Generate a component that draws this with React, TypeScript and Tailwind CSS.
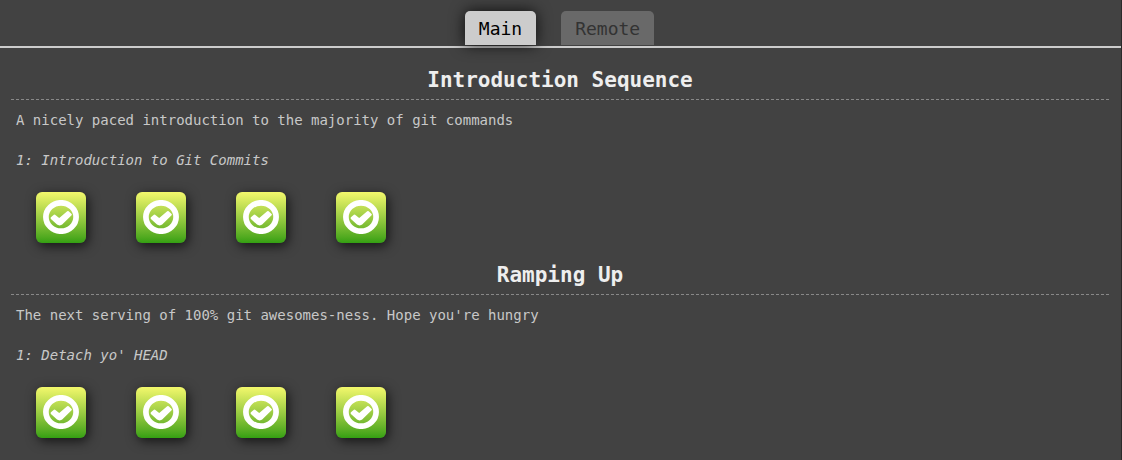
type Sequence = {
  title: string;
  about: string;
  level: string;
  count: number;
};

const sequences: Sequence[] = [
  {
    title: "Introduction Sequence",
    about: "A nicely paced introduction to the majority of git commands",
    level: "1: Introduction to Git Commits",
    count: 4,
  },
  {
    title: "Ramping Up",
    about: "The next serving of 100% git awesomes-ness. Hope you're hungry",
    level: "1: Detach yo' HEAD",
    count: 4,
  },
];

function CheckCircle() {
  return (
    <svg viewBox="0 0 36 34" className="h-[34px] w-9" fill="none" stroke="#fff" aria-hidden="true">
      <ellipse cx="18" cy="17" rx="15.1" ry="14.2" strokeWidth="5.7" />
      <path
        d="M7.9 17.3 L10.9 14.7 Q11.5 14.2 12.1 14.7 L16.2 18 L24.2 11.3 Q25 10.8 25.7 11.3 L28.6 14.1 Q29.2 14.7 28.6 15.3 L19.2 24.6 Q18.2 25.4 16.6 25.4 Q15 25.4 14 24.6 L7.9 18.9 Q7.2 18.1 7.9 17.3 Z"
        fill="#fff"
        stroke="none"
      />
    </svg>
  );
}

function SequenceSection({ title, about, level, count }: Sequence) {
  return (
    <section>
      <h2 className="border-b border-dashed border-[#888] pb-[3px] text-center text-[21px] leading-8 font-bold text-[#eee]">
        {title}
      </h2>
      <p className="px-[5px] pt-2.5 text-sm leading-5">{about}</p>
      <h3 className="px-[5px] pt-5 text-sm leading-5 font-normal italic">{level}</h3>
      <div className="flex flex-wrap gap-[50px] px-[25px] pt-[22px]">
        {Array.from({ length: count }, (_, i) => (
          <button
            key={i}
            type="button"
            aria-label={`${title}, level ${i + 1}, solved`}
            className="flex h-[51px] w-[50px] items-center justify-center rounded-md bg-linear-to-b from-[#f3f86c] to-[#33a012] pb-px shadow-[2px_3px_12px_rgba(0,0,0,0.7)]"
          >
            <CheckCircle />
          </button>
        ))}
      </div>
    </section>
  );
}

export default function App() {
  return (
    <div className="min-h-screen border-r border-[#2b2b2b] bg-[#424242] pb-5 font-['DejaVu_Sans_Mono','Liberation_Mono',monospace] text-[#c8c8c8]">
      <nav className="flex justify-center gap-[25px] border-b-2 border-[#ccc] pt-[11px] pr-0.5 pb-px text-lg leading-8">
        <button
          type="button"
          className="rounded-t-[5px] bg-[#ccc] px-3.5 pt-0.5 text-black shadow-[0_0_15px_rgba(0,0,0,0.8)]"
        >
          Main
        </button>
        <button type="button" className="rounded-t-[5px] bg-[#696969] px-3.5 pt-0.5 text-[#333]">
          Remote
        </button>
      </nav>
      <main className="flex flex-col gap-4 pt-4 pr-3 pl-[11px]">
        {sequences.map((s) => (
          <SequenceSection key={s.title} {...s} />
        ))}
      </main>
    </div>
  );
}
